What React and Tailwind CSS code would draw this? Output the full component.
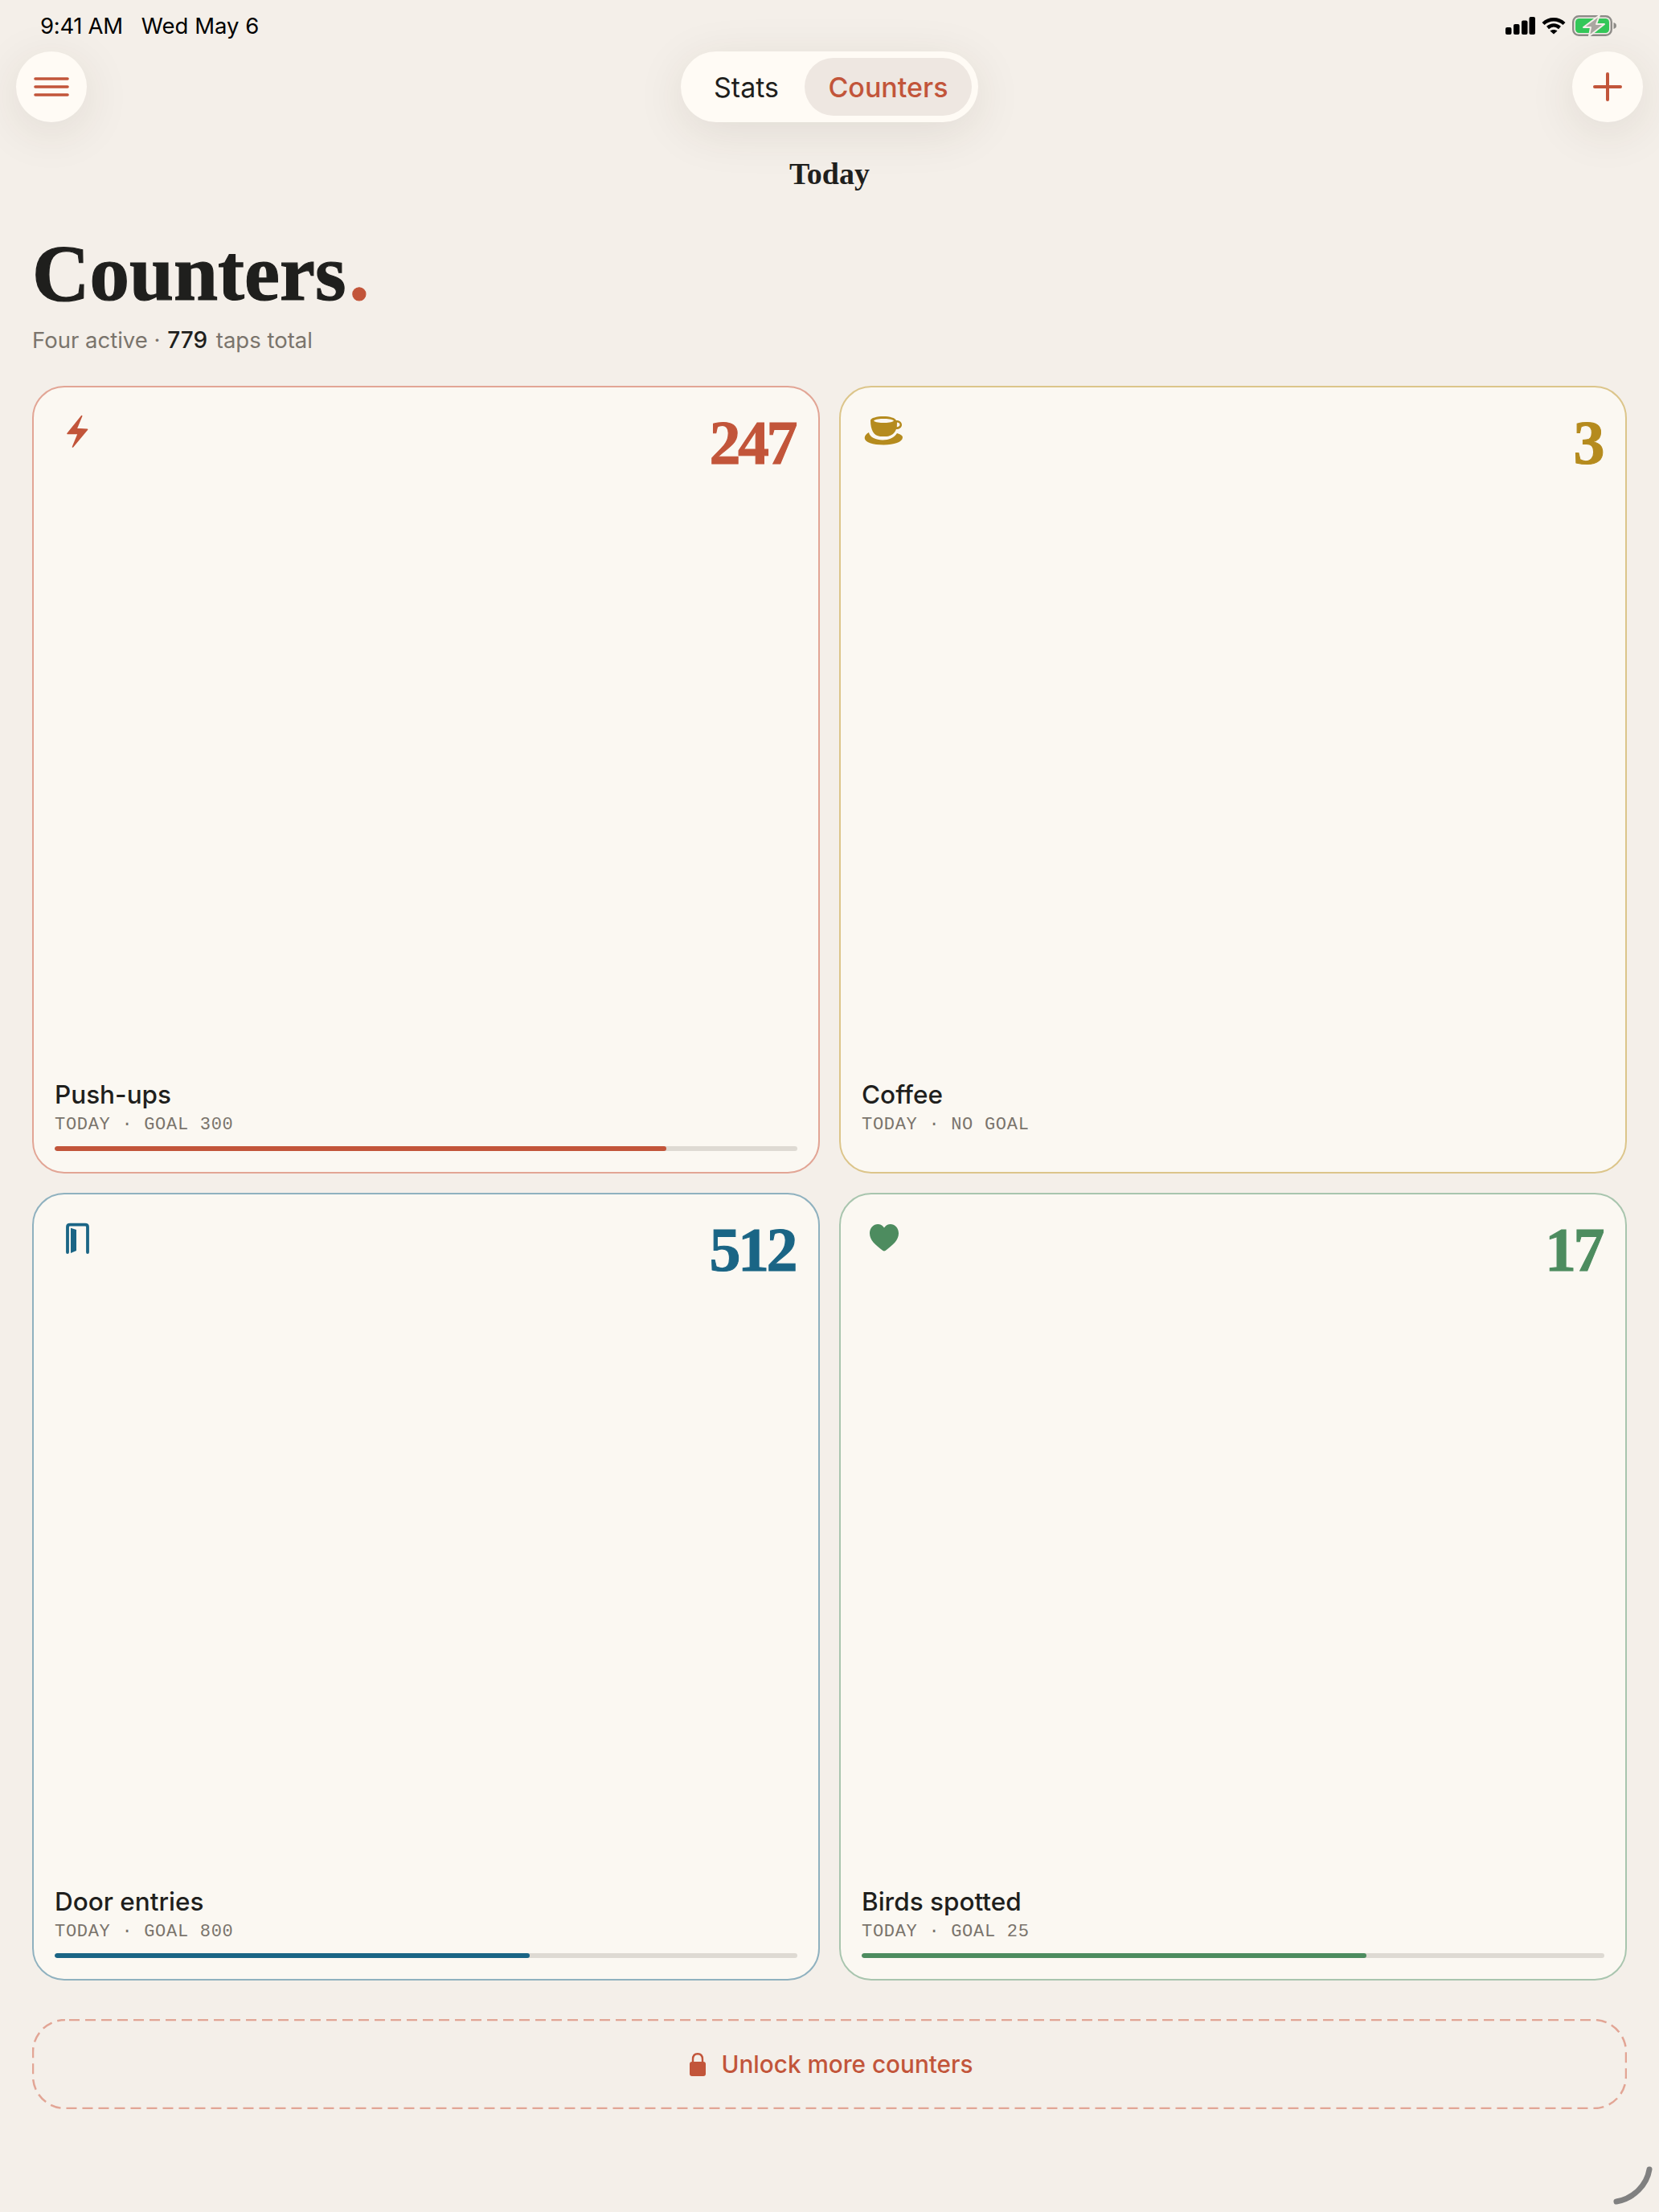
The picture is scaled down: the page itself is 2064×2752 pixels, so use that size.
const sans = 'font-["Inter","Liberation_Sans",sans-serif]';

const counters = [
  { name: 'Push-ups', sub: 'TODAY · GOAL 300', value: '247', pct: 82.33, icon: 'bolt', text: 'text-[#c2553a]', fill: 'bg-[#c2553a]', border: 'border-[#e2a595]' },
  { name: 'Coffee', sub: 'TODAY · NO GOAL', value: '3', icon: 'cup', text: 'text-[#b58b1e]', fill: 'bg-[#b58b1e]', border: 'border-[#dcc58a]' },
  { name: 'Door entries', sub: 'TODAY · GOAL 800', value: '512', pct: 64, icon: 'door', text: 'text-[#1a6585]', fill: 'bg-[#1a6585]', border: 'border-[#8fb1bf]' },
  { name: 'Birds spotted', sub: 'TODAY · GOAL 25', value: '17', pct: 68, icon: 'heart', text: 'text-[#4d8c5f]', fill: 'bg-[#4d8c5f]', border: 'border-[#a8c5ae]' },
];

const CardIcon = ({ type }) => {
  if (type === 'bolt') {
    return (
      <svg width="56" height="56" viewBox="0 0 56 56" fill="currentColor" stroke="currentColor" strokeWidth="1.6" strokeLinejoin="round">
        <path d="M33.7 9.5 L16 31.5 L29.3 31.5 L22.5 48 L40.6 26.3 L27 25.6 Z" />
      </svg>
    );
  }
  if (type === 'cup') {
    return (
      <svg width="56" height="56" viewBox="0 0 56 56" fill="currentColor">
        <path fillRule="evenodd" d="M11 15 C11 12 19 10 27 10 C35 10 42 12 43 15 C47 15 50 17 50 20.5 C50 24 47 26 43 26 C41 31 37 34.5 31 35 L23 35 C15 34 11 27 11 15 Z M15 15.5 C17 17.5 23 18 27.5 18 C32 18 38 17.5 40 15.5 C38 13.5 32 13 27.5 13 C23 13 17 13.5 15 15.5 Z M44 17.5 L43.8 23.3 C46 23 47.5 22 47.5 20.5 C47.5 18.7 46 17.5 44 17.5 Z" />
        <path d="M9 30 C10 36 18 39.5 26 39.5 C34 39.5 41 36 44 31 C48 32 51 34 51 36 C51 42 40 45.5 27.5 45.5 C14 45.5 3.7 42 3.7 37 C3.7 34 6 31.5 9 30 Z" />
      </svg>
    );
  }
  if (type === 'door') {
    return (
      <svg width="56" height="56" viewBox="0 0 56 56" fill="currentColor">
        <path d="M16 46 L16 14.5 C16 12.5 17 11.7 19 11.7 L38 11.7 C40 11.7 41 12.5 41 14.5 L41 46" fill="none" stroke="currentColor" strokeWidth="3.8" strokeLinecap="round" />
        <path d="M20 15.7 L27 18 L27 44 L20 47 Z" />
      </svg>
    );
  }
  return (
    <svg width="56" height="56" viewBox="0 0 56 56" fill="currentColor">
      <path d="M28 44.5 C27 44.5 26 43.8 24.5 42.6 C17 36.5 10 31 10 22.5 C10 15.5 14.8 11 20.2 11 C23.6 11 26.2 12.8 28 15.5 C29.8 12.8 32.4 11 35.8 11 C41.2 11 46 15.5 46 22.5 C46 31 39 36.5 31.5 42.6 C30 43.8 29 44.5 28 44.5 Z" />
    </svg>
  );
};

const CounterCard = ({ item }) => (
  <div className={`h-[980px] flex flex-col justify-between rounded-[40px] border-2 bg-[#fbf8f2] pt-[26px] pb-[26px] px-[26px] ${item.border}`}>
    <div className={`flex items-start justify-between ${item.text}`}>
      <CardIcon type={item.icon} />
      <span className='font-["Liberation_Serif",serif] font-bold text-[78px] leading-[78px] tracking-[-3.5px] mt-[4px] mr-[3px] [-webkit-text-stroke:1px_currentColor]'>{item.value}</span>
    </div>
    <div>
      <div className={`${sans} text-[31.5px] leading-[40px] font-medium text-[#1f1f1d]`}>{item.name}</div>
      <div className='font-["Liberation_Mono",monospace] text-[22px] leading-[24px] tracking-[0.7px] text-[#7a746c] mt-[6px]'>{item.sub}</div>
      <div className="h-[6px] mt-[14px]">
        {item.pct ? (
          <div className="h-[6px] w-full rounded-full bg-[#dedad3] overflow-hidden">
            <div className={`h-full rounded-full ${item.fill}`} style={{ width: `${item.pct}%` }} />
          </div>
        ) : null}
      </div>
    </div>
  </div>
);

const StatusIcons = () => (
  <div className="flex items-center gap-[8px]">
    <svg width="37" height="22" viewBox="0 0 37 22" fill="black">
      <rect x="0" y="13" width="7.5" height="9" rx="2" />
      <rect x="10" y="9" width="7.5" height="13" rx="2" />
      <rect x="20" y="4.5" width="7.5" height="17.5" rx="2" />
      <rect x="29.5" y="0" width="7.5" height="22" rx="2" />
    </svg>
    <svg width="30" height="22" viewBox="0 0 30 22" fill="none" stroke="black" strokeWidth="4.4">
      <path d="M2 8.5 C9.5 1.5 20.5 1.5 28 8.5" />
      <path d="M7.5 13.5 C12 9.5 18 9.5 22.5 13.5" />
      <path d="M15 21.5 L10.5 17.5 C13 15.5 17 15.5 19.5 17.5 Z" fill="black" stroke="none" />
    </svg>
    <svg width="56" height="26" viewBox="0 0 56 26" fill="none">
      <rect x="1.2" y="1.2" width="47.6" height="23.6" rx="7" stroke="#8e8c88" strokeWidth="2.4" />
      <rect x="4" y="4" width="42" height="18" rx="4.5" fill="#34c759" />
      <path d="M51.5 9 C54 9.8 55 11 55 13 C55 15 54 16.2 51.5 17 Z" fill="#8e8c88" />
      <path d="M34 0 L14 15 L23 15 L21 26 L40 11 L30 11 Z" fill="#aaa7a1" stroke="#f4efe9" strokeWidth="2" strokeLinejoin="round" />
    </svg>
  </div>
);

export default function App() {
  const circle = 'w-[88px] h-[88px] rounded-full bg-[#fffbf5] flex items-center justify-center text-[#c2553a] shadow-[0_12px_60px_rgba(60,50,30,0.10)]';

  return (
    <div className={`relative w-[2064px] h-[2752px] bg-[#f4efe9] overflow-hidden ${sans}`}>
      {/* Status bar */}
      <div className="h-[64px] flex items-center justify-between pl-[50px] pr-[52px] pb-[1px]">
        <div className="flex gap-[23px] text-[27.5px] leading-[34px] text-black">
          <span className="tracking-[-0.3px]">9:41 AM</span>
          <span>Wed May 6</span>
        </div>
        <StatusIcons />
      </div>

      {/* Top bar */}
      <div className="flex items-center justify-between px-[20px]">
        <div className={circle}>
          <svg width="44" height="24" viewBox="0 0 44 24" stroke="currentColor" strokeWidth="3.6" strokeLinecap="round">
            <path d="M2 2 H42" />
            <path d="M2 12 H42" />
            <path d="M2 22 H42" />
          </svg>
        </div>
        <div className="h-[88px] flex items-center rounded-full bg-[#fffbf5] p-[8px] shadow-[0_12px_60px_rgba(60,50,30,0.10)]">
          <div className="pl-[33px] pr-[32px] text-[34px] text-[#1f1f1d]">Stats</div>
          <div className="h-[72px] w-[208px] flex items-center justify-center rounded-full bg-[#eee7e1] text-[34px] font-medium text-[#c2553a]">Counters</div>
        </div>
        <div className={circle}>
          <svg width="36" height="36" viewBox="0 0 36 36" stroke="currentColor" strokeWidth="4" strokeLinecap="round">
            <path d="M18 2 V34" />
            <path d="M2 18 H34" />
          </svg>
        </div>
      </div>

      <div className='font-["Liberation_Serif",serif] font-bold text-[38px] leading-[48px] text-center text-[#1f1f1d] mt-[40px]'>Today</div>

      {/* Heading */}
      <div className="px-[40px] mt-[48px]">
        <h1 className='font-["Liberation_Serif",serif] font-bold text-[99px] leading-[104px] text-[#1f1f1d] [-webkit-text-stroke:1.2px_currentColor]'>
          Counters<span className="ml-[4px] text-[#c2553a]">.</span>
        </h1>
        <p className="text-[27.5px] leading-[36px] text-[#7a746c] mt-[13px]">
          Four active <span className="mr-[1px]">·</span> <span className="mr-[3px] text-[28px] font-medium text-[#1f1f1d]">779</span> taps total
        </p>
      </div>

      {/* Cards */}
      <div className="grid grid-cols-2 gap-[24px] px-[40px] mt-[39px]">
        {counters.map((item) => (
          <CounterCard key={item.name} item={item} />
        ))}
      </div>

      {/* Unlock */}
      <div className="relative mx-[40px] mt-[48px] h-[112px] flex items-center justify-center gap-[20px] pl-[4px] text-[#c2553a]">
        <svg className="absolute inset-0" width="100%" height="100%" fill="none">
          <rect x="1" y="1" width="1982" height="110" rx="40" stroke="#e2a595" strokeWidth="2.5" strokeDasharray="13 7" strokeDashoffset="-5" />
        </svg>
        <svg width="20" height="29" viewBox="0 0 20 29" fill="currentColor">
          <path d="M4 13 L4 8 C4 3.5 6.5 1.2 10 1.2 C13.5 1.2 16 3.5 16 8 L16 13" fill="none" stroke="currentColor" strokeWidth="2.4" />
          <rect x="0" y="11" width="20" height="18" rx="3" />
        </svg>
        <span className="text-[29.7px] font-medium">Unlock more counters</span>
      </div>

      {/* Pencil corner mark */}
      <svg className="absolute right-[8px] bottom-[8px]" width="50" height="50" viewBox="0 0 50 50" fill="none">
        <path d="M46 5 C43 24 27 41 5 45" stroke="#808080" strokeWidth="7" strokeLinecap="round" />
      </svg>
    </div>
  );
}
